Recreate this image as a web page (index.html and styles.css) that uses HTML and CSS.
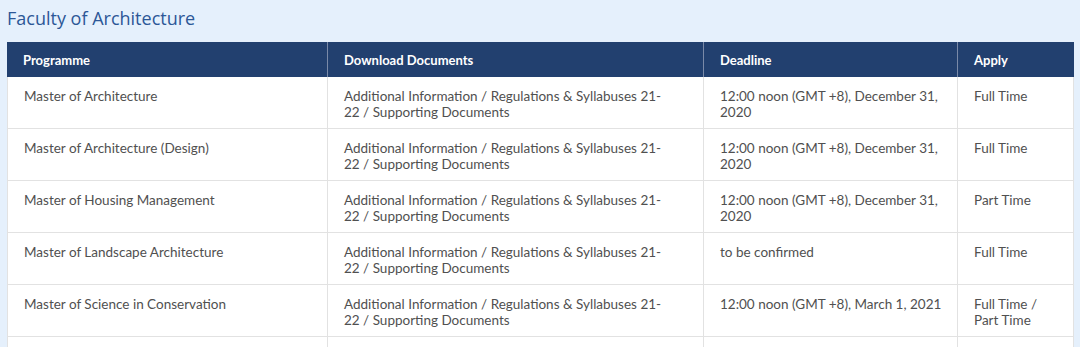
FILE: index.html
```html
<!DOCTYPE html>
<html lang="en">
<head>
<meta charset="utf-8">
<title>Faculty of Architecture</title>
<link rel="stylesheet" href="styles.css">
</head>
<body>
<div class="page">
  <h2 class="faculty-title">Faculty of Architecture</h2>
  <table class="prog-table">
    <colgroup>
      <col class="c-prog">
      <col class="c-docs">
      <col class="c-deadline">
      <col class="c-apply">
    </colgroup>
    <thead>
      <tr>
        <th>Programme</th>
        <th>Download Documents</th>
        <th>Deadline</th>
        <th>Apply</th>
      </tr>
    </thead>
    <tbody>
      <tr>
        <td>Master of Architecture</td>
        <td class="docs">Additional Information / Regulations &amp; Syllabuses 21-<wbr>22 / Supporting Documents</td>
        <td class="deadline">12:00 noon (GMT +8), December 31, 2020</td>
        <td>Full Time</td>
      </tr>
      <tr>
        <td>Master of Architecture (Design)</td>
        <td class="docs">Additional Information / Regulations &amp; Syllabuses 21-<wbr>22 / Supporting Documents</td>
        <td class="deadline">12:00 noon (GMT +8), December 31, 2020</td>
        <td>Full Time</td>
      </tr>
      <tr>
        <td>Master of Housing Management</td>
        <td class="docs">Additional Information / Regulations &amp; Syllabuses 21-<wbr>22 / Supporting Documents</td>
        <td class="deadline">12:00 noon (GMT +8), December 31, 2020</td>
        <td>Part Time</td>
      </tr>
      <tr>
        <td>Master of Landscape Architecture</td>
        <td class="docs">Additional Information / Regulations &amp; Syllabuses 21-<wbr>22 / Supporting Documents</td>
        <td class="deadline">to be confirmed</td>
        <td>Full Time</td>
      </tr>
      <tr>
        <td>Master of Science in Conservation</td>
        <td class="docs">Additional Information / Regulations &amp; Syllabuses 21-<wbr>22 / Supporting Documents</td>
        <td class="deadline">12:00 noon (GMT +8), March 1, 2021</td>
        <td>Full Time / Part Time</td>
      </tr>
      <tr class="row-cut">
        <td></td>
        <td></td>
        <td></td>
        <td></td>
      </tr>
    </tbody>
  </table>
</div>
</body>
</html>
```

FILE: styles.css
```css
html, body {
  margin: 0;
  padding: 0;
  background: #e5f0fc;
}

body {
  font-family: Lato, "Open Sans", "Liberation Sans", sans-serif;
  color: #505050;
}

.page {
  padding: 6px 6px 0 7px;
}

.faculty-title {
  margin: 0 0 12px 0;
  font-weight: 400;
  font-size: 18px;
  line-height: 24px;
  color: #2c5797;
  font-family: "Open Sans", Lato, sans-serif;
}

.prog-table {
  width: 1067px;
  border-collapse: separate;
  border-spacing: 0;
  table-layout: fixed;
  background: #ffffff;
  font-size: 13.5px;
  line-height: 16px;
}

.c-prog { width: 320px; }
.c-docs { width: 376px; }
.c-deadline { width: 254px; }
.c-apply { width: 117px; }

.prog-table th {
  background: #22406f;
  color: #ffffff;
  font-weight: 700;
  font-size: 13px;
  text-align: left;
  height: 35px;
  padding: 0 16px;
  border-left: 1px solid #7a8aa8;
  box-sizing: border-box;
}

.prog-table th:first-child {
  border-left: none;
}

.prog-table td {
  vertical-align: top;
  height: 52px;
  box-sizing: border-box;
  padding: 11px 16px 0 16px;
  border-left: 1px solid #e2e2e2;
  border-bottom: 1px solid #e2e2e2;
}

.prog-table td:last-child {
  border-right: 1px solid #e2e2e2;
}

.prog-table td.docs {
  padding-right: 30px;
}

.prog-table td.deadline {
  padding-right: 6px;
}
```
